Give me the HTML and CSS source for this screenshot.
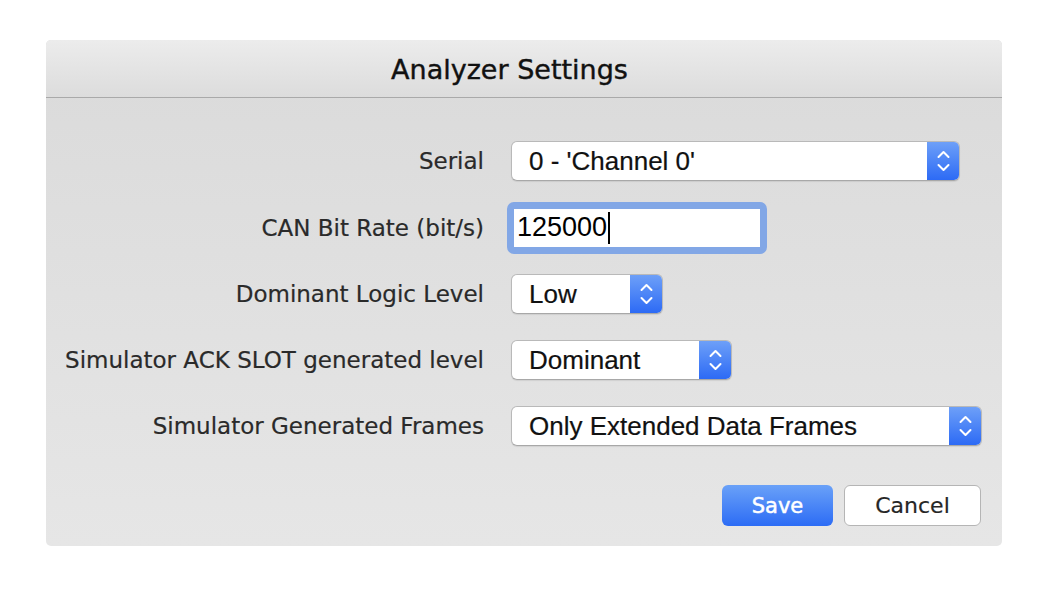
FILE: index.html
```html
<!DOCTYPE html>
<html>
<head>
<meta charset="utf-8">
<title>Analyzer Settings</title>
<link rel="stylesheet" href="styles.css">
</head>
<body>
<div class="dialog">
  <div class="titlebar">Analyzer Settings</div>
  <div class="content">
    <div class="form">
      <div class="lbl">Serial</div>
      <div class="ctl">
        <div class="select w-serial"><span class="val">0 - 'Channel 0'</span><span class="stepper"><svg width="33" height="40" viewBox="0 0 33 40"><path d="M11.5 16 L16.5 11 L21.5 16 M11.5 24 L16.5 29 L21.5 24" fill="none" stroke="#fff" stroke-width="2" stroke-linecap="round" stroke-linejoin="round"/></svg></span></div>
      </div>

      <div class="lbl">CAN Bit Rate (bit/s)</div>
      <div class="ctl">
        <div class="textfield"><span class="tval">125000</span><span class="caret"></span></div>
      </div>

      <div class="lbl">Dominant Logic Level</div>
      <div class="ctl">
        <div class="select w-low"><span class="val">Low</span><span class="stepper"><svg width="33" height="40" viewBox="0 0 33 40"><path d="M11.5 16 L16.5 11 L21.5 16 M11.5 24 L16.5 29 L21.5 24" fill="none" stroke="#fff" stroke-width="2" stroke-linecap="round" stroke-linejoin="round"/></svg></span></div>
      </div>

      <div class="lbl">Simulator ACK SLOT generated level</div>
      <div class="ctl">
        <div class="select w-dom"><span class="val">Dominant</span><span class="stepper"><svg width="33" height="40" viewBox="0 0 33 40"><path d="M11.5 16 L16.5 11 L21.5 16 M11.5 24 L16.5 29 L21.5 24" fill="none" stroke="#fff" stroke-width="2" stroke-linecap="round" stroke-linejoin="round"/></svg></span></div>
      </div>

      <div class="lbl">Simulator Generated Frames</div>
      <div class="ctl">
        <div class="select w-frames"><span class="val">Only Extended Data Frames</span><span class="stepper"><svg width="33" height="40" viewBox="0 0 33 40"><path d="M11.5 16 L16.5 11 L21.5 16 M11.5 24 L16.5 29 L21.5 24" fill="none" stroke="#fff" stroke-width="2" stroke-linecap="round" stroke-linejoin="round"/></svg></span></div>
      </div>
    </div>
    <div class="buttons">
      <div class="btn btn-save">Save</div>
      <div class="btn btn-cancel">Cancel</div>
    </div>
  </div>
</div>
</body>
</html>
```

FILE: styles.css
```css
html, body {
  margin: 0;
  padding: 0;
  background: #ffffff;
}

.dialog {
  margin: 40px 0 0 46px;
  width: 956px;
  height: 506px;
  border-radius: 5px;
  overflow: hidden;
  background: linear-gradient(#dadada, #e6e6e6);
  display: flex;
  flex-direction: column;
}

.titlebar {
  height: 58px;
  border-bottom: 1px solid #a9a9a9;
  background: linear-gradient(#ececec, #dcdcdc);
  display: flex;
  align-items: center;
  justify-content: center;
  font-family: "DejaVu Sans", sans-serif;
  font-size: 27px;
  color: #111111;
  -webkit-text-stroke: 0.4px #111111;
  padding: 2px 29px 0 0;
  box-sizing: border-box;
}

.content {
  flex: 1;
  padding: 30px 21px 0 0;
  display: flex;
  flex-direction: column;
}

.form {
  display: grid;
  grid-template-columns: 438px 1fr;
  grid-template-rows: 66px 67px 66px 66px 66px;
  column-gap: 27px;
  align-items: center;
}

.lbl {
  text-align: right;
  font-family: "DejaVu Sans", sans-serif;
  font-size: 23px;
  color: #2a2a2a;
  -webkit-text-stroke: 0.2px #2a2a2a;
}

.ctl {
  display: flex;
  align-items: center;
}

.select {
  height: 40px;
  box-sizing: border-box;
  border: 1px solid #b9b9b9;
  border-bottom-color: #a8a8a8;
  border-radius: 6px;
  background: #ffffff;
  display: flex;
  align-items: center;
  justify-content: space-between;
  overflow: hidden;
  box-shadow: 0 1px 1px rgba(0,0,0,0.08);
}

.w-serial { width: 449px; }
.w-low { width: 152px; }
.w-dom { width: 221px; }
.w-frames { width: 471px; }

.val {
  padding-left: 17px;
  font-family: "Liberation Sans", sans-serif;
  font-size: 26px;
  color: #111111;
  -webkit-text-stroke: 0.2px #111111;
  white-space: nowrap;
}

.stepper {
  width: 33px;
  height: 40px;
  margin-right: -1px;
  flex: none;
  background: linear-gradient(#6fa1f8, #2b69f5);
  display: flex;
  align-items: center;
  justify-content: center;
}

.stepper svg {
  display: block;
}

.textfield {
  width: 252px;
  height: 44px;
  box-sizing: border-box;
  border: 3px solid #82a7e6;
  box-shadow: 0 0 0 4px #82a7e6;
  border-radius: 3px;
  background: #ffffff;
  display: flex;
  align-items: center;
  padding-left: 3px;
}

.tval {
  font-family: "Liberation Sans", sans-serif;
  font-size: 27px;
  color: #000000;
}

.caret {
  display: inline-block;
  width: 2px;
  height: 32px;
  background: #000000;
  margin-left: 1px;
}

.buttons {
  margin-top: 26px;
  display: flex;
  justify-content: flex-end;
  gap: 11px;
}

.btn {
  height: 41px;
  box-sizing: border-box;
  border-radius: 6px;
  display: flex;
  align-items: center;
  justify-content: center;
  font-family: "DejaVu Sans", sans-serif;
  font-size: 22px;
}

.btn-save {
  width: 111px;
  background: linear-gradient(#6aa1f8, #2c6cf5);
  color: #ffffff;
  font-size: 21px;
  -webkit-text-stroke: 0.5px #ffffff;
}

.btn-cancel {
  width: 137px;
  background: #ffffff;
  border: 1px solid #b5b5b5;
  color: #262626;
  -webkit-text-stroke: 0.2px #262626;
}
```
